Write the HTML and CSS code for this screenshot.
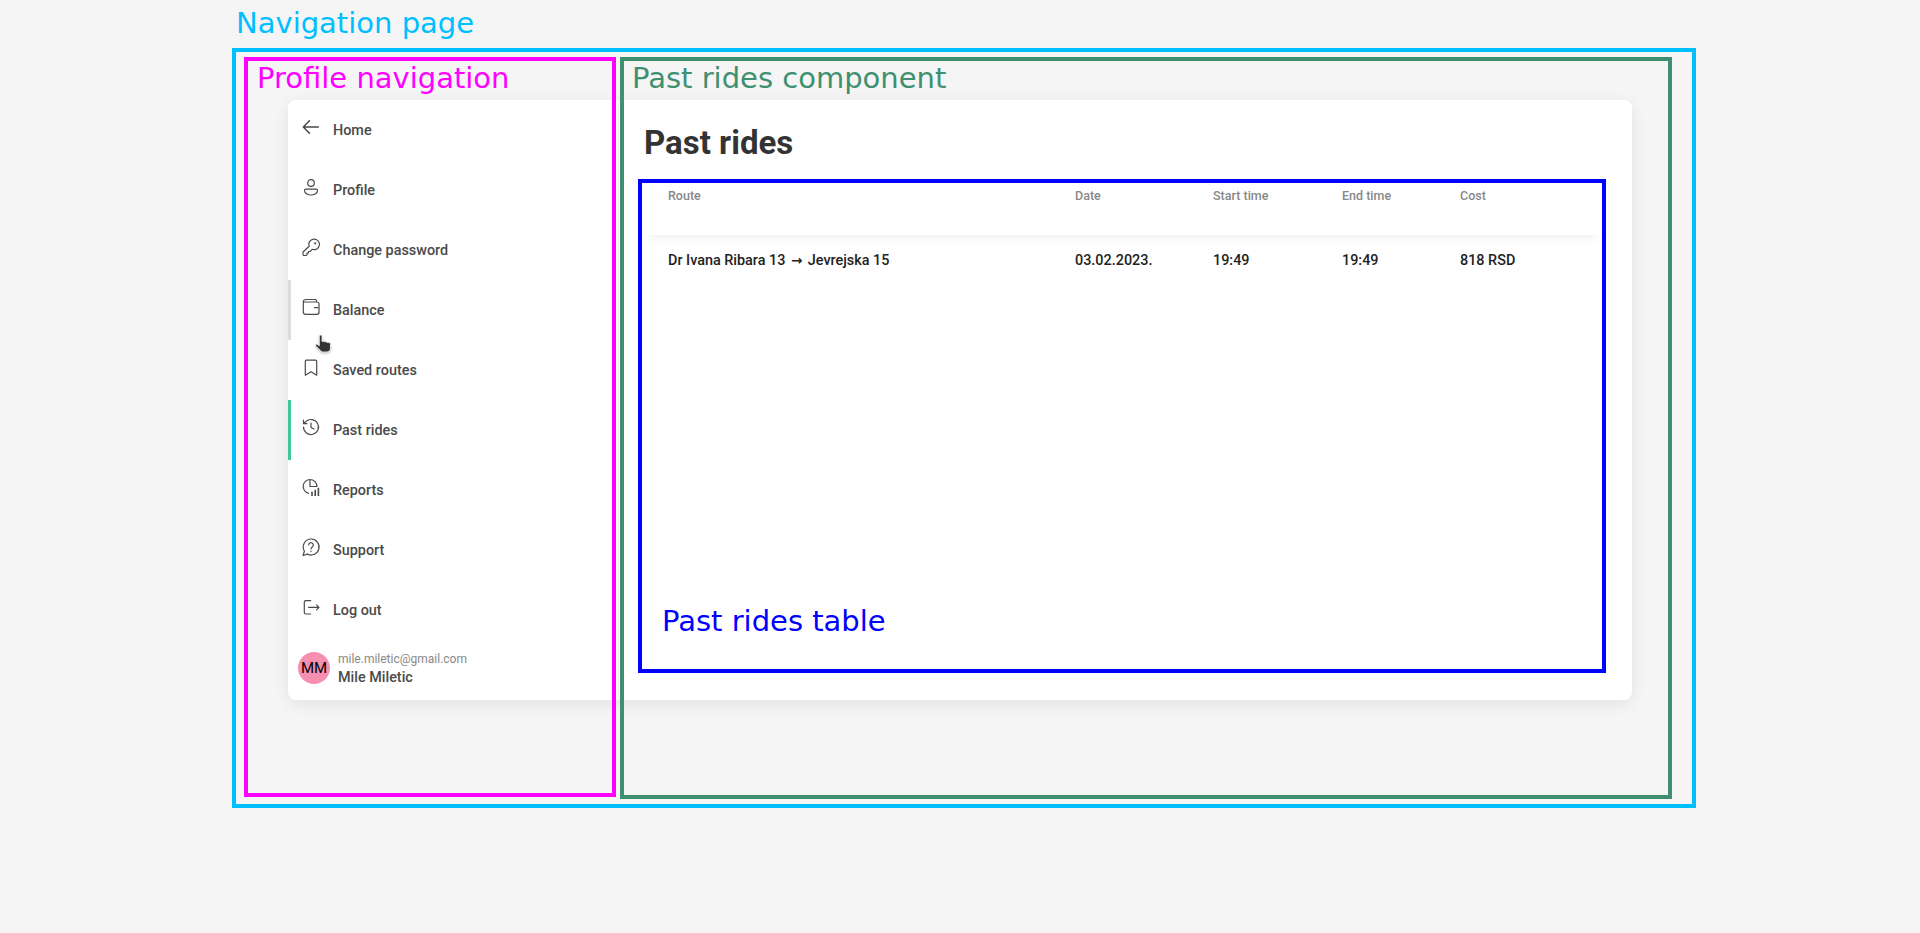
FILE: index.html
```html
<!DOCTYPE html>
<html lang="en">

<head>
    <meta charset="UTF-8">
    <meta name="viewport" content="width=device-width, initial-scale=1.0">
    <title>Past rides</title>
    <link rel="stylesheet" href="styles.css">
</head>

<body>
    <div class="card">
        <nav class="profile-nav">
            <a class="nav-item">
                <svg class="nav-icon icon-arrow" viewBox="0 0 24 24"><path d="M19.300 12H4.600M10.500 5.800L4.300 12l6.200 6.200"/></svg>
                <span>Home</span>
            </a>
            <a class="nav-item">
                <svg class="nav-icon" viewBox="0 0 24 24"><circle cx="12" cy="8" r="3.300"/><path d="M6.800 14.200h10.400c.8 0 1.300.6 1.300 1.300 0 2.500-3 4.500-6.500 4.500s-6.500-2-6.500-4.500c0-.7.500-1.300 1.300-1.300z"/></svg>
                <span>Profile</span>
            </a>
            <a class="nav-item">
                <svg class="nav-icon" viewBox="0 0 24 24"><path d="M10.200 11.300a5.300 5.300 0 1 1 3 3L11 16.500H9.500V18H8v1.500l-1 1H5a1 1 0 0 1-1-1v-2a1 1 0 0 1 .3-.7z"/><circle cx="16.200" cy="8.300" r=".5"/></svg>
                <span>Change password</span>
            </a>
            <a class="nav-item nav-item-hover">
                <svg class="nav-icon" viewBox="0 0 24 24"><path d="M17.500 7V5.500a1 1 0 0 0-1-1H6.600a2.300 2.300 0 0 0-2.300 2.300V17a2.300 2.300 0 0 0 2.300 2.300H18a2 2 0 0 0 2-2V9a2 2 0 0 0-2-2H4.500M15.500 12.700h3.200"/></svg>
                <span>Balance</span>
            </a>
            <a class="nav-item">
                <svg class="nav-icon" viewBox="0 0 24 24"><path d="M7.300 5.200h9.400a1 1 0 0 1 1 1v14L12 16.700l-5.700 3.500v-14a1 1 0 0 1 1-1z"/></svg>
                <span>Saved routes</span>
            </a>
            <a class="nav-item nav-item-active">
                <svg class="nav-icon" viewBox="0 0 24 24"><path d="M4.500 12a7.500 7.500 0 1 0 2.200-5.300L4.500 8.500M4.500 5.200v3.500H8M12 8v4.500l3 1.500"/></svg>
                <span>Past rides</span>
            </a>
            <a class="nav-item">
                <svg class="nav-icon" viewBox="0 0 24 24"><path d="M11 4.500a7 7 0 0 0-1.500 13.800M11 4.500v7h7a7 7 0 0 0-7-7z"/><path class="icon-bars" d="M13 21v-4.300M16.200 21v-6.300M19.400 21v-8.300"/></svg>
                <span>Reports</span>
            </a>
            <a class="nav-item">
                <svg class="nav-icon" viewBox="0 0 24 24"><path d="M12 4a8 8 0 1 1-3.600 15.100L4 20.500l1.400-4.300A8 8 0 0 1 12 4z"/><path d="M9.700 10a2.300 2.300 0 1 1 3.600 1.900c-.9.600-1.300 1-1.300 2M12 16.200v.4"/></svg>
                <span>Support</span>
            </a>
            <a class="nav-item">
                <svg class="nav-icon" viewBox="0 0 24 24"><path d="M11.700 5.700H6.800a1.500 1.500 0 0 0-1.500 1.500v10.300A1.500 1.500 0 0 0 6.800 19h4.900M9.500 12.300H20M17.500 9.800l2.500 2.500-2.500 2.500"/></svg>
                <span>Log out</span>
            </a>
            <div class="nav-user">
                <div class="avatar">MM</div>
                <div class="user-info">
                    <div class="user-email">mile.miletic@gmail.com</div>
                    <div class="user-name">Mile Miletic</div>
                </div>
            </div>
        </nav>

        <main class="past-rides">
            <h1>Past rides</h1>
            <table class="rides-table">
                <thead>
                    <tr>
                        <th class="col-route">Route</th>
                        <th class="col-date">Date</th>
                        <th class="col-start">Start time</th>
                        <th class="col-end">End time</th>
                        <th>Cost</th>
                    </tr>
                </thead>
                <tbody>
                    <tr>
                        <td>Dr Ivana Ribara 13 <span class="route-arrow">→</span> Jevrejska 15</td>
                        <td>03.02.2023.</td>
                        <td>19:49</td>
                        <td>19:49</td>
                        <td>818 RSD</td>
                    </tr>
                </tbody>
            </table>
        </main>
    </div>

    <!-- annotation boxes drawn over the page -->
    <div class="note note-page"><span class="note-label">Navigation page</span></div>
    <div class="note note-nav"><span class="note-label">Profile navigation</span></div>
    <div class="note note-rides"><span class="note-label">Past rides component</span></div>
    <div class="note note-table"><span class="note-label">Past rides table</span></div>

    <svg class="cursor" viewBox="0 0 18 20">
        <path d="M5.300 2c0-1.300 2.700-1.300 2.700 0v5.500c1-.5 2-.3 2.500.3 1-.4 2-.2 2.500.7 1.200-.5 3.500-.1 3.500 1.800V14c0 2.500-1.500 4-4 4H9.500c-1.500 0-2.500-.6-3.400-1.800L1.800 12c-.8-1 .5-2.300 1.700-1.500l1.800 1.300z"/>
    </svg>
</body>

</html>
```

FILE: styles.css
```css
body {
    margin: 0;
    height: 933px;
    overflow: hidden;
    background-color: #f5f5f5;
    font-family: Roboto, sans-serif;
}

.card {
    display: flex;
    width: 1344px;
    height: 600px;
    margin: 100px 0 0 288px;
    background-color: #fff;
    border-radius: 8px;
    box-shadow: 0 4px 16px rgba(0, 0, 0, 0.08);
}

.profile-nav {
    flex: 0 0 331px;
    border-right: 1px solid #eee;
    box-sizing: border-box;
}

.nav-item {
    display: flex;
    align-items: center;
    gap: 10px;
    height: 60px;
    box-sizing: border-box;
    padding-left: 8px;
    border-left: 3px solid transparent;
    font-size: 14.4px;
    font-weight: 500;
    color: #4a4a4a;
}

.nav-item-hover {
    border-left-color: #ddd;
}

.nav-item-active {
    border-left-color: #42c796;
}

.nav-icon {
    width: 24px;
    height: 24px;
    margin-bottom: 6px;
    fill: none;
    stroke: #4a4a4a;
    stroke-width: 1.2;
    stroke-linecap: round;
    stroke-linejoin: round;
}

.icon-arrow {
    stroke-width: 1.5;
}

.icon-bars {
    stroke-width: 1.6;
    stroke-linecap: butt;
}

.nav-user {
    display: flex;
    align-items: center;
    gap: 8px;
    height: 58px;
    padding-left: 10px;
}

.avatar {
    display: flex;
    align-items: center;
    justify-content: center;
    width: 32px;
    height: 32px;
    margin-bottom: 2px;
    border-radius: 50%;
    background-color: #f78fb0;
    color: #000;
    font-size: 15px;
}

.user-email {
    font-size: 12px;
    line-height: 18px;
    color: #888;
}

.user-name {
    font-size: 14.4px;
    font-weight: 500;
    line-height: 20px;
    color: #4a4a4a;
}

.past-rides {
    flex: 1;
    padding: 0 30px 0 23px;
}

h1 {
    margin: 24px 0 17px 2px;
    font-size: 33px;
    font-weight: 700;
    line-height: 38px;
    color: #333;
}

.rides-table {
    width: 960px;
    table-layout: fixed;
    border-collapse: collapse;
}

.rides-table thead tr {
    box-shadow: 0 7px 10px -5px rgba(0, 0, 0, 0.07);
}

.rides-table th {
    height: 56px;
    box-sizing: border-box;
    padding: 10px 0 0;
    vertical-align: top;
    text-align: left;
    font-size: 12.5px;
    font-weight: 500;
    line-height: 14px;
    color: #888;
}

.rides-table td {
    padding: 16px 0 0;
    font-size: 14.4px;
    font-weight: 500;
    line-height: 18px;
    color: #222;
}

.route-arrow {
    margin: 0 2px;
    font-family: "DejaVu Sans", sans-serif;
    font-size: 13.5px;
    font-weight: 700;
}

.rides-table th:first-child,
.rides-table td:first-child {
    padding-left: 26px;
}

.col-route {
    width: 433px;
}

.col-date {
    width: 138px;
}

.col-start {
    width: 129px;
}

.col-end {
    width: 118px;
}

.note {
    position: absolute;
    box-sizing: border-box;
    border: 4px solid;
}

.note-label {
    position: absolute;
    font-family: "DejaVu Sans", sans-serif;
    font-size: 29px;
    line-height: 34px;
    white-space: nowrap;
}

.note-page {
    left: 232px;
    top: 48px;
    width: 1464px;
    height: 760px;
    color: #00bfff;
}

.note-page .note-label {
    left: 0;
    top: -46px;
}

.note-nav {
    left: 244px;
    top: 57px;
    width: 372px;
    height: 740px;
    color: #ff00ff;
}

.note-nav .note-label {
    left: 9px;
    top: 0;
}

.note-rides {
    left: 620px;
    top: 57px;
    width: 1052px;
    height: 742px;
    color: #3f9070;
}

.note-rides .note-label {
    left: 8px;
    top: 0;
}

.note-table {
    left: 638px;
    top: 179px;
    width: 968px;
    height: 494px;
    color: #0000ff;
}

.note-table .note-label {
    left: 20px;
    top: 421px;
}

.cursor {
    position: absolute;
    left: 314px;
    top: 334px;
    width: 18px;
    height: 20px;
    fill: #333;
    stroke: #fff;
    stroke-width: 0.8;
    filter: drop-shadow(0 1px 1px rgba(0, 0, 0, 0.3));
}
```
